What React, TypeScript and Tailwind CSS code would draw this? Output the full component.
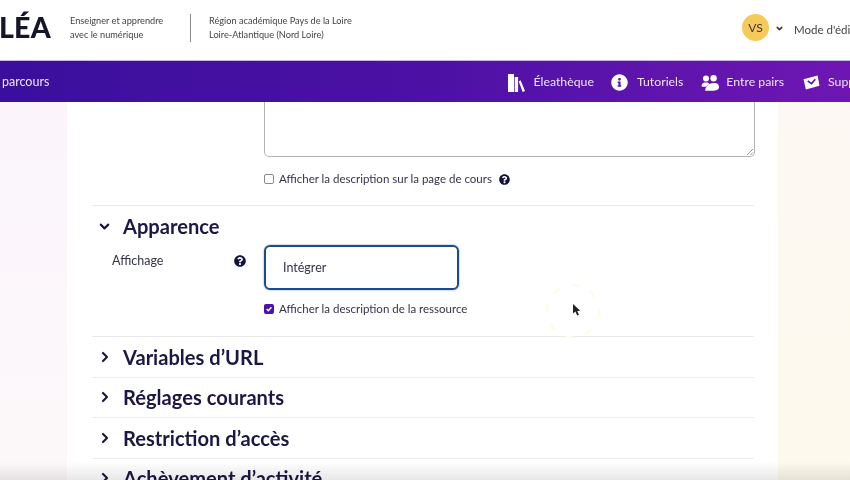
import { ChevronDown, ChevronRight } from "lucide-react";
import { FaInfoCircle, FaQuestionCircle } from "react-icons/fa";

function Help({ className }: { className: string }) {
  return <FaQuestionCircle className={className} />;
}

function Section({ title }: { title: string }) {
  return (
    <div className="flex h-[40.5px] shrink-0 items-center border-b border-[#eeeeee]">
      <div className="flex w-[31px] justify-start pl-[5px]">
        <ChevronRight size={16} strokeWidth={3.2} className="text-[#1a1a3a]" />
      </div>
      <span className="text-[20.1px] font-bold leading-none text-[#1c1846]">{title}</span>
    </div>
  );
}

function NavItem({ icon, label, className = "gap-[8px]" }: { icon: React.ReactNode; label: string; className?: string }) {
  return (
    <div className={`flex shrink-0 items-center ${className}`}>
      {icon}
      <span className="text-[12.3px] leading-none text-[#ece4f6]">{label}</span>
    </div>
  );
}

export default function App() {
  return (
    <div className="relative h-[480px] w-[850px] overflow-hidden bg-white font-['Lato',sans-serif] blur-[0.4px]">
      <header className="flex h-[60px] items-center bg-white pb-[5px]">
        <div className="flex w-[70px] shrink-0 items-center">
          <span className="-ml-[1px] text-[28.5px] font-black leading-none tracking-[0.2px] text-[#16162a]">LÉA</span>
        </div>
        <div className="w-[120px] shrink-0 text-[9.2px] leading-[14px] text-[#444444]">
          <div>Enseigner et apprendre</div>
          <div>avec le numérique</div>
        </div>
        <div className="h-[28px] w-px shrink-0 bg-[#8a8a8a]" />
        <div className="ml-[18px] text-[9.2px] leading-[14px] text-[#444444]">
          <div>Région académique Pays de la Loire</div>
          <div>Loire-Atlantique (Nord Loire)</div>
        </div>
        <div className="ml-auto flex shrink-0 items-center">
          <div className="flex h-[27px] w-[27px] items-center justify-center rounded-full bg-[#f5c95a] text-[12px] text-[#3a3340]">VS</div>
          <ChevronDown size={9} strokeWidth={4} className="ml-[6px] mt-[1px] text-[#333333]" />
          <span className="ml-[10px] mt-[4px] w-[56px] overflow-hidden whitespace-nowrap text-[11.5px] text-[#444444]">Mode d'édition</span>
        </div>
      </header>

      <nav className="flex h-[42px] items-center justify-between border-t border-[#c9b5e6] bg-gradient-to-r from-[#3a0f9c] via-[#4c10a5] to-[#6f16b2] pl-[2px] pt-[2px]">
        <span className="text-[12.5px] leading-none text-[#ece4f6]">parcours</span>
        <div className="flex items-center gap-[18px]">
          <NavItem
            label="Éleathèque"
            icon={
              <svg viewBox="0 0 17 18" className="h-[18px] w-[17px] fill-white">
                <rect x="0" y="0" width="6" height="18" />
                <rect x="6.7" y="3" width="3.4" height="15" />
                <path d="M10.8 7.5L12.6 6.2L17 17L14.6 18Z" />
              </svg>
            }
          />
          <NavItem label="Tutoriels" className="-ml-[1px] gap-[9px]" icon={<FaInfoCircle className="h-[17px] w-[17px] text-white" />} />
          <NavItem
            label="Entre pairs"
            className="gap-[7px]"
            icon={
              <svg viewBox="0 0 18 16" className="h-[16px] w-[18px] fill-white">
                <circle cx="5" cy="3.6" r="3" />
                <circle cx="12.6" cy="3.2" r="3.2" />
                <path d="M0.5 10.5C1 8 3 7.5 5 7.5S8 8 8.7 9.2C7 9.8 6 10.5 5 11.8L1 11.8Z" />
                <path d="M4 15.5C4.5 12 7.5 8 12.5 8S17.8 10 18 12.5C18 14.5 15 15.8 11 15.8C8 15.8 5.5 15.8 4 15.5Z" />
              </svg>
            }
          />
          <div className="ml-[1px] flex w-[47px] shrink-0 items-center gap-[8px] overflow-hidden">
            <svg viewBox="0 0 18 16" className="h-[15px] w-[17px] shrink-0 fill-white">
              <path d="M0.5 4.5L15.5 0.5L17.5 11.5L3 15.5Z" />
              <path d="M5 6.2L9 9.2L13 4.6" fill="none" stroke="#5a13aa" strokeWidth="1.8" />
            </svg>
            <span className="text-[12.3px] leading-none text-[#ece4f6]">Support</span>
          </div>
        </div>
      </nav>

      <main className="flex h-[378px]">
        <div className="w-[67px] shrink-0 bg-gradient-to-b from-[#fbf5fb] to-[#fcf8fa]" />
        <div className="w-[711px] shrink-0 bg-white pl-[25px] pr-[24px]">
          <div className="flex flex-col border-b border-[#eaeaea] pb-[20px]">
            <div className="relative ml-[172px] h-[55px] w-[491px] rounded-b-[5px] border-x border-b border-[#b3b3b3]">
              <svg viewBox="0 0 8 8" className="absolute bottom-0 right-0 h-[8px] w-[8px]">
                <path d="M1 7L7 1M4.5 7L7 4.5" stroke="#9a9a9a" strokeWidth="1" />
              </svg>
            </div>
            <label className="ml-[172px] mt-[16px] flex h-[12px] items-center text-[11.5px] text-[#33334a]">
              <span className="mr-[5px] h-[10px] w-[10px] rounded-[2px] border border-[#8a8a8a] bg-white" />
              Afficher la description sur la page de cours
              <Help className="ml-[7px] h-[11px] w-[11px] text-[#12123a]" />
            </label>
          </div>

          <div className="flex flex-col border-b border-[#eaeaea] pb-[21px]">
            <div className="mt-[9px] flex h-[22px] items-center">
              <div className="w-[31px] pl-[5px]">
                <ChevronDown size={15} strokeWidth={3.4} className="text-[#1a1a3a]" />
              </div>
              <span className="text-[20.1px] font-bold leading-none text-[#1c1846]">Apparence</span>
            </div>
            <div className="mt-[8px] flex items-start">
              <span className="ml-[20px] mt-[7px] w-[122px] text-[12.5px] text-[#33334a]">Affichage</span>
              <Help className="mt-[10px] h-[12px] w-[12px] text-[#12123a]" />
              <div className="ml-[18px] flex h-[45px] w-[195px] items-center rounded-[6px] border-2 border-[#1c4a8a] pl-[17px] pt-[2px] text-[12.5px] text-[#33334a] shadow-[0_0_2px_#6f93c4]">
                Intégrer
              </div>
            </div>
            <label className="ml-[172px] mt-[13px] flex h-[12px] items-center text-[11.5px] text-[#33334a]">
              <span className="mr-[5px] flex h-[10px] w-[10px] items-center justify-center rounded-[2px] bg-[#4a14a8]">
                <svg viewBox="0 0 10 10" className="h-[8px] w-[8px]">
                  <path d="M2 5l2.2 2.2L8 2.8" fill="none" stroke="white" strokeWidth="1.8" />
                </svg>
              </span>
              Afficher la description de la ressource
            </label>
          </div>

          <Section title="Variables d’URL" />
          <Section title="Réglages courants" />
          <Section title="Restriction d’accès" />
          <Section title="Achèvement d’activité" />
        </div>
        <div className="flex-1 bg-gradient-to-b from-[#fdf8f3] to-[#fdf9ec]" />
      </main>

      <svg viewBox="0 0 64 64" className="absolute left-[541px] top-[279px] h-[64px] w-[64px]">
        <circle cx="32" cy="32" r="26" fill="none" stroke="#fdfbe6" strokeWidth="2" strokeDasharray="8 12" />
      </svg>
      <svg viewBox="0 0 10 14" className="absolute left-[572px] top-[303px] h-[14px] w-[10px]">
        <path d="M1 1L1 10.5L3.4 8.6L5.2 12.6L7 11.8L5.2 8L8.2 7.8Z" fill="#222222" />
      </svg>
      <div className="absolute inset-x-0 bottom-0 h-[18px] bg-gradient-to-b from-transparent to-[#00000018]" />
    </div>
  );
}
